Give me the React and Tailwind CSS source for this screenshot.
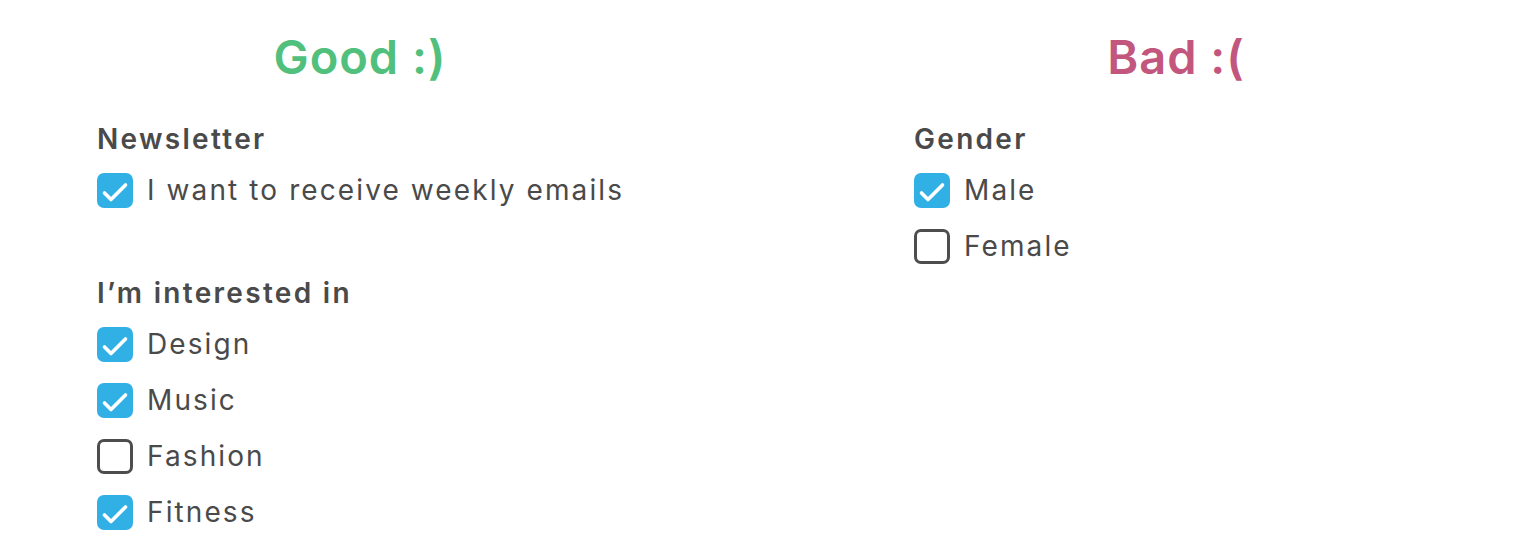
const font = { fontFamily: 'Inter, "Noto Sans", sans-serif' };

function Checkbox({ checked }) {
  if (checked) {
    return (
      <span className="flex h-[35px] w-[36px] shrink-0 items-center justify-center rounded-[7px] bg-[#31b0e6]">
        <svg width="36" height="35" viewBox="0 0 36 35" fill="none">
          <polyline
            points="7.5,20 14,26.5 28.5,12"
            stroke="white"
            strokeWidth="3.6"
            strokeLinecap="round"
            strokeLinejoin="round"
          />
        </svg>
      </span>
    );
  }
  return <span className="h-[35px] w-[36px] shrink-0 rounded-[7px] border-[3px] border-[#4d4d4d] bg-white" />;
}

function Option({ label, checked }) {
  return (
    <div className="flex h-[56px] items-center gap-[14px]">
      <Checkbox checked={checked} />
      <span className="text-[28px] tracking-[2.1px] text-[#4a4a4a]">{label}</span>
    </div>
  );
}

function Group({ title, options, className = '' }) {
  return (
    <div className={className}>
      <div className="h-[46px] text-[28px] font-semibold leading-[46px] tracking-[2.3px] text-[#4a4a4a]">{title}</div>
      {options.map((o) => (
        <Option key={o.label} {...o} />
      ))}
    </div>
  );
}

export default function App() {
  return (
    <div className="flex h-[560px] w-[1536px] gap-[96px] bg-white pt-[27px]" style={font}>
      <section className="w-[720px]">
        <h1 className="h-[60px] text-center text-[47px] font-semibold leading-[60px] tracking-[1px] text-[#50c07c]">Good :)</h1>
        <div className="mt-[29px] pl-[97px]">
          <Group title="Newsletter" options={[{ label: 'I want to receive weekly emails', checked: true }]} />
          <Group
            className="mt-[52px]"
            title="I’m interested in"
            options={[
              { label: 'Design', checked: true },
              { label: 'Music', checked: true },
              { label: 'Fashion', checked: false },
              { label: 'Fitness', checked: true },
            ]}
          />
        </div>
      </section>
      <section className="w-[720px]">
        <h1 className="h-[60px] text-center text-[47px] font-semibold leading-[60px] tracking-[1px] text-[#c2567d]">Bad :(</h1>
        <div className="mt-[29px] pl-[98px]">
          <Group
            title="Gender"
            options={[
              { label: 'Male', checked: true },
              { label: 'Female', checked: false },
            ]}
          />
        </div>
      </section>
    </div>
  );
}
